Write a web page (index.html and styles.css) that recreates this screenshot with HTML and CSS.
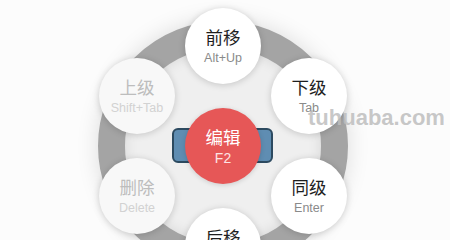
FILE: index.html
```html
<!DOCTYPE html>
<html>
<head>
<meta charset="utf-8">
<link rel="stylesheet" href="styles.css">
</head>
<body>
<div class="stage">
  <div class="menu">
    <div class="ring"></div>
    <div class="editbar"></div>
    <div class="node n-top"><span class="lbl">前移</span><span class="key">Alt+Up</span></div>
    <div class="node n-tr"><span class="lbl">下级</span><span class="key">Tab</span></div>
    <div class="node n-br"><span class="lbl">同级</span><span class="key">Enter</span></div>
    <div class="node n-bot"><span class="lbl">后移</span><span class="key">Alt+Down</span></div>
    <div class="node n-bl off"><span class="lbl">删除</span><span class="key">Delete</span></div>
    <div class="node n-tl off"><span class="lbl">上级</span><span class="key">Shift+Tab</span></div>
    <div class="node center"><span class="lbl">编辑</span><span class="key">F2</span></div>
  </div>
  <div class="watermark">tuhuaba.com</div>
</div>
</body>
</html>
```

FILE: styles.css
```css
html, body {
  margin: 0;
  padding: 0;
}
body {
  width: 450px;
  height: 240px;
  overflow: hidden;
  background: #fcfcfc;
  font-family: "Liberation Sans", "Noto Sans CJK SC", sans-serif;
}
.stage {
  position: relative;
  width: 450px;
  height: 240px;
  overflow: hidden;
  padding-top: 21px;
  padding-left: 98px;
  box-sizing: border-box;
}
.menu {
  position: relative;
  width: 250px;
  height: 250px;
}
.ring {
  position: absolute;
  left: 0;
  top: 0;
  width: 250px;
  height: 250px;
  box-sizing: border-box;
  border-radius: 50%;
  border: 27px solid #a4a4a4;
  background: #efefef;
  box-shadow: 0 0 22px rgba(0,0,0,0.13), inset 0 0 14px rgba(0,0,0,0.10);
}
.editbar {
  position: absolute;
  left: 74px;
  top: 107px;
  width: 101px;
  height: 35px;
  box-sizing: border-box;
  border: 2px solid #2c4a60;
  border-radius: 6px;
  background: #5f8db2;
}
.node {
  position: absolute;
  width: 76px;
  height: 76px;
  border-radius: 50%;
  background: #ffffff;
  box-shadow: 0 1px 7px rgba(0,0,0,0.18);
  display: flex;
  flex-direction: column;
  align-items: center;
  justify-content: center;
  gap: 3px;
}
.lbl {
  font-size: 17.5px;
  line-height: 20px;
  color: #1e1e1e;
}
.key {
  font-size: 12.5px;
  line-height: 14px;
  color: #8a8a8a;
}
.off {
  background: #f8f8f8;
}
.off .lbl { color: #bdbdbd; }
.off .key { color: #d2d2d2; }
.n-top { left: 87px; top: -13px; }
.n-tr  { left: 173px; top: 37px; }
.n-br  { left: 173px; top: 137px; }
.n-bot { left: 87px; top: 187px; }
.n-bl  { left: 1px; top: 137px; }
.n-tl  { left: 1px; top: 37px; }
.center {
  left: 87px;
  top: 87px;
  background: #e65757;
  box-shadow: 0 1px 5px rgba(0,0,0,0.15);
}
.center .lbl { color: #ffffff; }
.center .key { color: #fde3e3; font-size: 14px; }
.watermark {
  position: absolute;
  left: 308px;
  top: 105px;
  font-family: "Liberation Sans", sans-serif;
  font-weight: bold;
  font-size: 22px;
  color: rgba(190,190,190,0.85);
}
```
